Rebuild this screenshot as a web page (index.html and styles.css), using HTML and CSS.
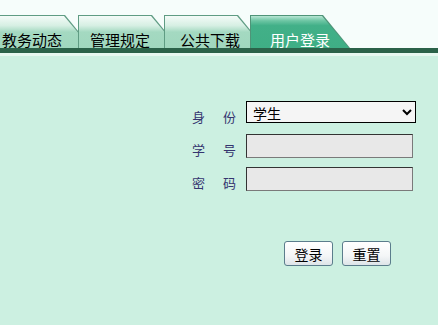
FILE: index.html
```html
<!DOCTYPE html>
<html lang="zh-CN">
<head>
    <meta charset="UTF-8">
    <title>用户登录</title>
    <link rel="stylesheet" href="styles.css">
</head>
<body>
    <div class="top">
        <div class="tabs">
            <div class="tab tab-1">教务动态</div>
            <div class="tab tab-2">管理规定</div>
            <div class="tab tab-3">公共下载</div>
            <div class="tab tab-4 active">用户登录</div>
        </div>
    </div>
    <div class="bar"></div>
    <div class="main">
        <form class="login">
            <div class="fields">
                <label class="label" for="role"><span>身</span><span>份</span></label>
                <div class="cell">
                    <select id="role" class="select">
                        <option>学生</option>
                        <option>教师</option>
                        <option>管理员</option>
                    </select>
                </div>

                <label class="label" for="uid"><span>学</span><span>号</span></label>
                <div class="cell"><input type="text" id="uid" class="text"></div>

                <label class="label" for="pwd"><span>密</span><span>码</span></label>
                <div class="cell"><input type="password" id="pwd" class="text"></div>
            </div>
            <div class="buttons">
                <button type="button" class="btn">登录</button>
                <button type="reset" class="btn">重置</button>
            </div>
        </form>
    </div>
</body>
</html>
```

FILE: styles.css
```css
body {
    margin: 0;
    font-family: "Noto Sans CJK SC", "Liberation Sans", sans-serif;
    background-color: #ccf0e1;
}
.top {
    background-color: #f6fdfb;
    padding-top: 15px;
}
.tabs {
    display: flex;
    height: 33px;
}
/* each tab is 86px apart; its shape (101px wide) runs under the next tab */
.tab {
    position: relative;
    z-index: 0;
    width: 86px;
    height: 33px;
    flex-shrink: 0;
    box-sizing: border-box;
    padding-top: 16px;
    font-size: 15px;
    line-height: 17px;
    color: #000;
    white-space: nowrap;
}
.tab::before,
.tab::after {
    content: "";
    position: absolute;
    z-index: -1;
    clip-path: polygon(0 0, calc(100% - 27px) 0, 100% 100%, 0 100%);
}
.tab::before {
    top: 0;
    left: 0;
    width: 101px;
    height: 100%;
    background-color: #5f9c83;
}
.tab::after {
    top: 1px;
    left: 1px;
    width: 99px;
    height: calc(100% - 1px);
    background: linear-gradient(#f4fbf8, #d6efe3 30%, #a4d9c1 50%, #a0d7be);
}
.tab-1 { width: 87px; margin-left: -9px; padding-left: 11px; }
.tab-2 { padding-left: 12px; }
.tab-3 { padding-left: 16px; }
.tab-4 { width: 100px; padding-left: 20px; }
.tab-4::before { width: 100px; }
.tab-4::after { width: 98px; }
.tab.active { color: #fff; }
.tab.active::before { background-color: #4f9478; }
.tab.active::after {
    background: linear-gradient(#b8e6d4, #6cc5a3 15%, #42b088 30%, #3fae85);
}
.bar {
    position: relative;
    z-index: 1;
    height: 5px;
    background-color: #2b6249;
    border-bottom: 3px solid #e7f8f0;
}
.main {
    padding: 45px 0 0 192px;
}
.fields {
    display: grid;
    grid-template-columns: 45px 170px;
    grid-template-rows: 24px 24px 24px;
    column-gap: 9px;
    row-gap: 9px;
}
.label {
    display: flex;
    justify-content: space-between;
    align-self: end;
    padding: 0 1px 1px 0;
    font-size: 13px;
    line-height: 14px;
    color: #35356f;
}
.select {
    display: block;
    width: 170px;
    height: 22px;
    margin: 0;
    padding: 0 2px;
    font-family: "Noto Sans CJK SC", sans-serif;
    font-size: 14px;
    color: #000;
    background-color: #f5f5f5;
    border: 1px solid #000;
    border-radius: 0;
}
.text {
    display: block;
    width: 167px;
    height: 24px;
    margin: 0;
    padding: 0 3px;
    box-sizing: border-box;
    background-color: #e8e8e8;
    border: 1px solid #7a7a7a;
    border-top-color: #333;
    border-left-color: #333;
}
.buttons {
    display: flex;
    gap: 9px;
    margin-top: 50px;
    padding-left: 92px;
}
.btn {
    width: 49px;
    height: 25px;
    padding: 0;
    font-family: "Noto Sans CJK SC", sans-serif;
    font-size: 14px;
    line-height: 20px;
    color: #000;
    background: linear-gradient(#ffffff, #f4f6f7 60%, #dde4e8);
    border: 1px solid #5b7d8c;
    border-radius: 3px;
    cursor: pointer;
}
```
